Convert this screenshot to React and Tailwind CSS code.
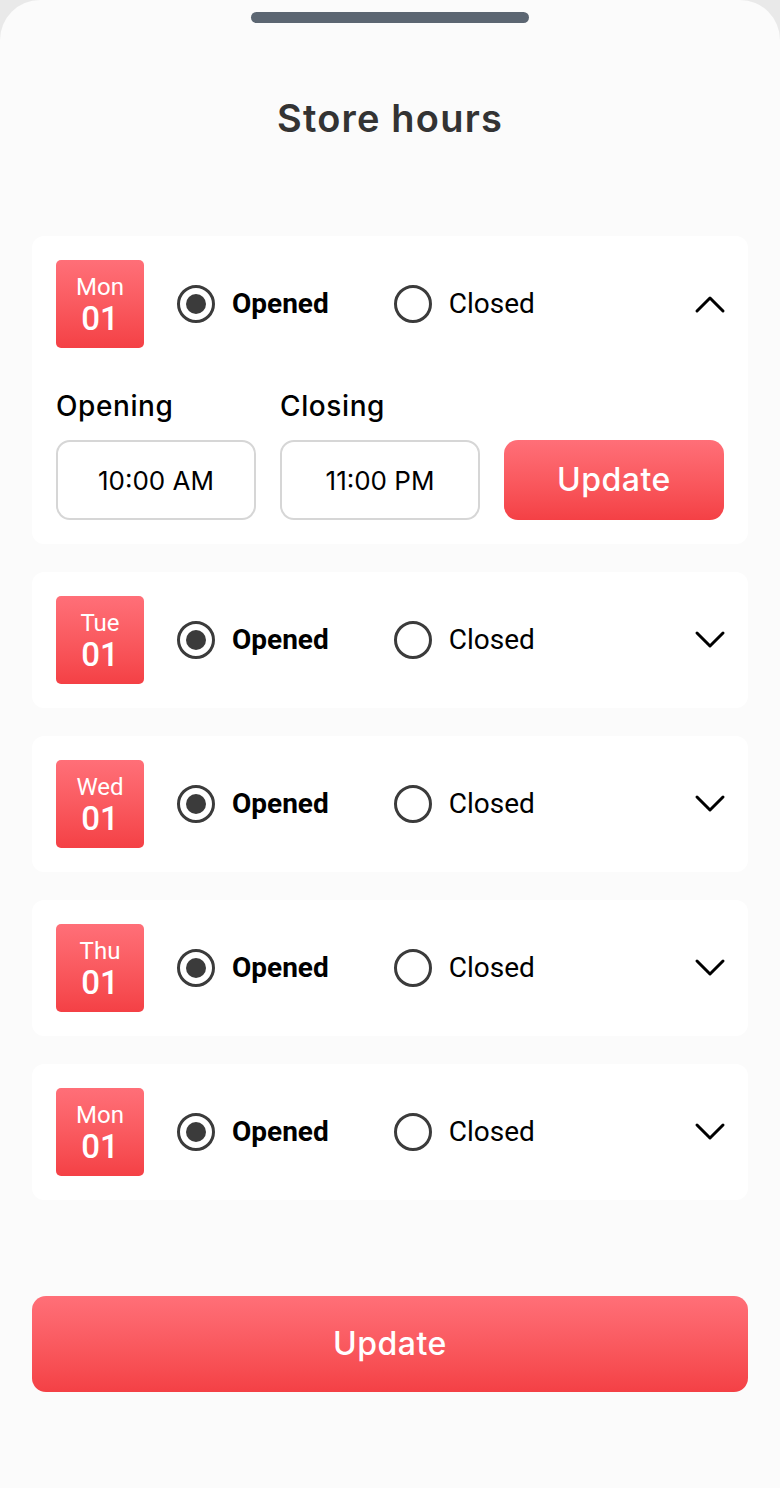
import React from "react";

const days = [
  { d: "Mon", n: "01", open: true },
  { d: "Tue", n: "01" },
  { d: "Wed", n: "01" },
  { d: "Thu", n: "01" },
  { d: "Mon", n: "01" },
];

function Radio({ checked, label }) {
  return (
    <div className="flex items-center gap-[17px]">
      <div className="w-[38px] h-[38px] rounded-full border-[3px] border-[#3b3b3b] flex items-center justify-center">
        {checked && <div className="w-[20px] h-[20px] rounded-full bg-[#3b3b3b]" />}
      </div>
      <span
        className={`text-[28px] leading-[32px] text-black ${checked ? "font-bold" : "font-normal"}`}
        style={{ fontFamily: "Roboto, sans-serif" }}
      >
        {label}
      </span>
    </div>
  );
}

function Chevron({ up }) {
  return (
    <svg width="32" height="20" viewBox="0 0 32 20" fill="none">
      {up ? (
        <path d="M3 17 L16 4 L29 17" stroke="#000" strokeWidth="3" strokeLinecap="round" strokeLinejoin="round" />
      ) : (
        <path d="M3 3 L16 16 L29 3" stroke="#000" strokeWidth="3" strokeLinecap="round" strokeLinejoin="round" />
      )}
    </svg>
  );
}

function DayRow({ day }) {
  return (
    <div className="flex items-center">
      <div
        className="w-[88px] h-[88px] rounded-[5px] bg-gradient-to-b from-[#ff6f78] to-[#f44045] flex flex-col items-center pt-[15px] gap-[4px] text-white"
        style={{ fontFamily: "Roboto, sans-serif" }}
      >
        <span className="text-[24px] leading-[24px]">{day.d}</span>
        <span className="text-[33px] leading-[32px] font-medium">{day.n}</span>
      </div>
      <div className="ml-[33px]">
        <Radio checked label="Opened" />
      </div>
      <div className="ml-[65px]">
        <Radio label="Closed" />
      </div>
      <div className="ml-auto mr-[-2px] flex items-center">
        <Chevron up={day.open} />
      </div>
    </div>
  );
}

export default function App() {
  const poppins = { fontFamily: "Inter, 'Open Sans', sans-serif" };
  return (
    <div className="w-[780px] h-[1488px] bg-[#e9e9e9]">
      <div className="w-full h-full bg-[#fbfbfb] rounded-t-[40px] flex flex-col items-center">
        <div className="mt-[12px] w-[278px] h-[11px] rounded-full bg-[#5c6672]" />
        <h1
          className="mt-[74px] text-[38px] leading-[42px] font-semibold text-[#333333] tracking-[1.2px]"
          style={poppins}
        >
          Store hours
        </h1>
        <div className="mt-[97px] w-[716px] flex flex-col gap-[28px]">
          {days.map((day, i) => (
            <div key={i} className="bg-white rounded-[12px] p-[24px]">
              <DayRow day={day} />
              {day.open && (
                <div className="mt-[36px]">
                  <div
                    className="flex text-[28px] font-medium text-black leading-[44px] tracking-[0.6px]"
                    style={poppins}
                  >
                    <span className="w-[224px]">Opening</span>
                    <span>Closing</span>
                  </div>
                  <div className="mt-[12px] flex gap-[24px]">
                    <div
                      className="w-[200px] h-[80px] rounded-[14px] border-[2px] border-[#d6d6d6] flex items-center justify-center text-[26px] text-black"
                      style={poppins}
                    >
                      10:00 AM
                    </div>
                    <div
                      className="w-[200px] h-[80px] rounded-[14px] border-[2px] border-[#d6d6d6] flex items-center justify-center text-[26px] text-black"
                      style={poppins}
                    >
                      11:00 PM
                    </div>
                    <button
                      className="w-[220px] h-[80px] rounded-[14px] bg-gradient-to-b from-[#ff6f78] to-[#f44045] text-white text-[32px] font-medium tracking-[0.5px]"
                      style={poppins}
                    >
                      Update
                    </button>
                  </div>
                </div>
              )}
            </div>
          ))}
        </div>
        <button
          className="mt-[96px] w-[716px] h-[96px] rounded-[14px] bg-gradient-to-b from-[#ff6f78] to-[#f44045] text-white text-[32px] font-medium tracking-[0.5px]"
          style={poppins}
        >
          Update
        </button>
      </div>
    </div>
  );
}
